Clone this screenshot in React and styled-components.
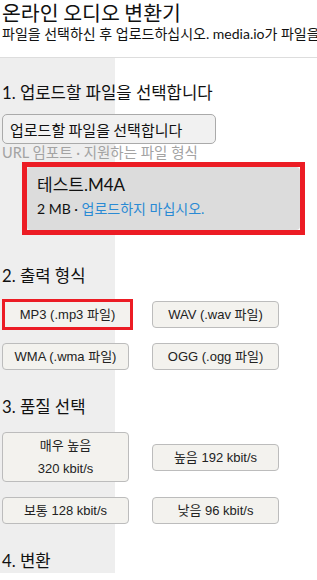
import React from "react";
import styled, { createGlobalStyle } from "styled-components";

const Global = createGlobalStyle`
  html, body { margin: 0; padding: 0; background: #fff; }
  body {
    font-family: "Lato", "Noto Sans CJK KR", sans-serif;
    color: #111;
    overflow: hidden;
  }
`;

const Page = styled.div`
  width: 317px;
  overflow: hidden;
`;

const Header = styled.header`
  height: 57px;
  box-sizing: border-box;
  padding: 0 2px;
`;

const Title = styled.h1`
  margin: 0;
  font-family: "Noto Sans CJK KR", sans-serif;
  font-weight: 400;
  font-size: 20.5px;
  line-height: 25px;
  color: #111;
`;

const Lead = styled.p`
  margin: 0;
  font-size: 14px;
  line-height: 18px;
  white-space: nowrap;
`;

const Main = styled.main`
  border-top: 1px solid #dddddd;
  background: linear-gradient(to right, #eeeeee 0 115px, #ffffff 115px);
  padding: 0 2px 1px;
`;

const Heading = styled.h2`
  margin: ${(p) => p.$top}px 0 0;
  font-weight: 400;
  font-size: 16.7px;
  line-height: 22px;
  color: #111;
`;

const UploadButton = styled.button`
  display: block;
  margin-top: 10px;
  height: 30px;
  width: 214px;
  box-sizing: border-box;
  padding: 0 7px;
  border: 1px solid #aaaaaa;
  border-radius: 5px;
  background: #f1f1f1;
  font-family: "Noto Sans CJK KR", sans-serif;
  font-size: 15px;
  color: #111;
  text-align: left;
`;

const Hint = styled.div`
  font-size: 14.5px;
  line-height: 18px;
  color: #a3a3a3;
`;

const Selected = styled.div`
  margin-left: 20px;
  width: 283px;
  box-sizing: border-box;
  border: 5px solid #ec1c24;
`;

const FileCard = styled.div`
  background: #dcdcdc;
  border-radius: 4px;
  height: 63px;
  padding: 6px 10px 0;
  box-sizing: border-box;
`;

const FileName = styled.div`
  font-size: 17px;
  line-height: 24px;
  color: #111;
`;

const FileMeta = styled.div`
  margin-top: 2px;
  font-size: 14px;
  line-height: 20px;
  color: #111;
`;

const Link = styled.span`
  color: #2a8ad4;
`;

const Choices = styled.div`
  display: grid;
  grid-template-columns: ${(p) => p.$cols};
  column-gap: ${(p) => p.$colGap}px;
  row-gap: ${(p) => p.$rowGap}px;
  align-items: center;
  justify-items: start;
  margin-top: ${(p) => p.$top}px;
`;

const Choice = styled.button`
  box-sizing: content-box;
  width: 125px;
  min-height: 25px;
  padding: ${(p) => (p.$tall ? "1px 0" : "0")};
  margin: 0;
  border: ${(p) => (p.$selected ? "3px solid #ec1c24" : "1px solid #bcbcbc")};
  border-radius: ${(p) => (p.$selected ? "0" : "4px")};
  background: #f3f2ee;
  font-family: "Liberation Sans", "Noto Sans CJK KR", sans-serif;
  font-size: 13px;
  line-height: ${(p) => (p.$tall ? "23px" : "25px")};
  color: #222;
  text-align: center;
  white-space: nowrap;
`;

const Line = styled.span`
  display: block;
`;

export default function App() {
  return (
    <Page>
      <Global />
      <Header>
        <Title>온라인 오디오 변환기</Title>
        <Lead>파일을 선택하신 후 업로드하십시오. media.io가 파일을 변환합니다.</Lead>
      </Header>
      <Main>
        <Heading $top={24}>1. 업로드할 파일을 선택합니다</Heading>
        <UploadButton>업로드할 파일을 선택합니다</UploadButton>
        <Hint>URL 임포트 · 지원하는 파일 형식</Hint>
        <Selected>
          <FileCard>
            <FileName>테스트.M4A</FileName>
            <FileMeta>
              2 MB · <Link>업로드하지 마십시오.</Link>
            </FileMeta>
          </FileCard>
        </Selected>

        <Heading $top={30}>2. 출력 형식</Heading>
        <Choices $cols="131px 127px" $colGap={19} $rowGap={13} $top={12}>
          <Choice $selected>MP3 (.mp3 파일)</Choice>
          <Choice>WAV (.wav 파일)</Choice>
          <Choice>WMA (.wma 파일)</Choice>
          <Choice>OGG (.ogg 파일)</Choice>
        </Choices>

        <Heading $top={26}>3. 품질 선택</Heading>
        <Choices $cols="127px 127px" $colGap={23} $rowGap={15} $top={14}>
          <Choice $tall>
            <Line>매우 높음</Line>
            <Line>320 kbit/s</Line>
          </Choice>
          <Choice>높음 192 kbit/s</Choice>
          <Choice>보통 128 kbit/s</Choice>
          <Choice>낮음 96 kbit/s</Choice>
        </Choices>

        <Heading $top={26}>4. 변환</Heading>
      </Main>
    </Page>
  );
}
